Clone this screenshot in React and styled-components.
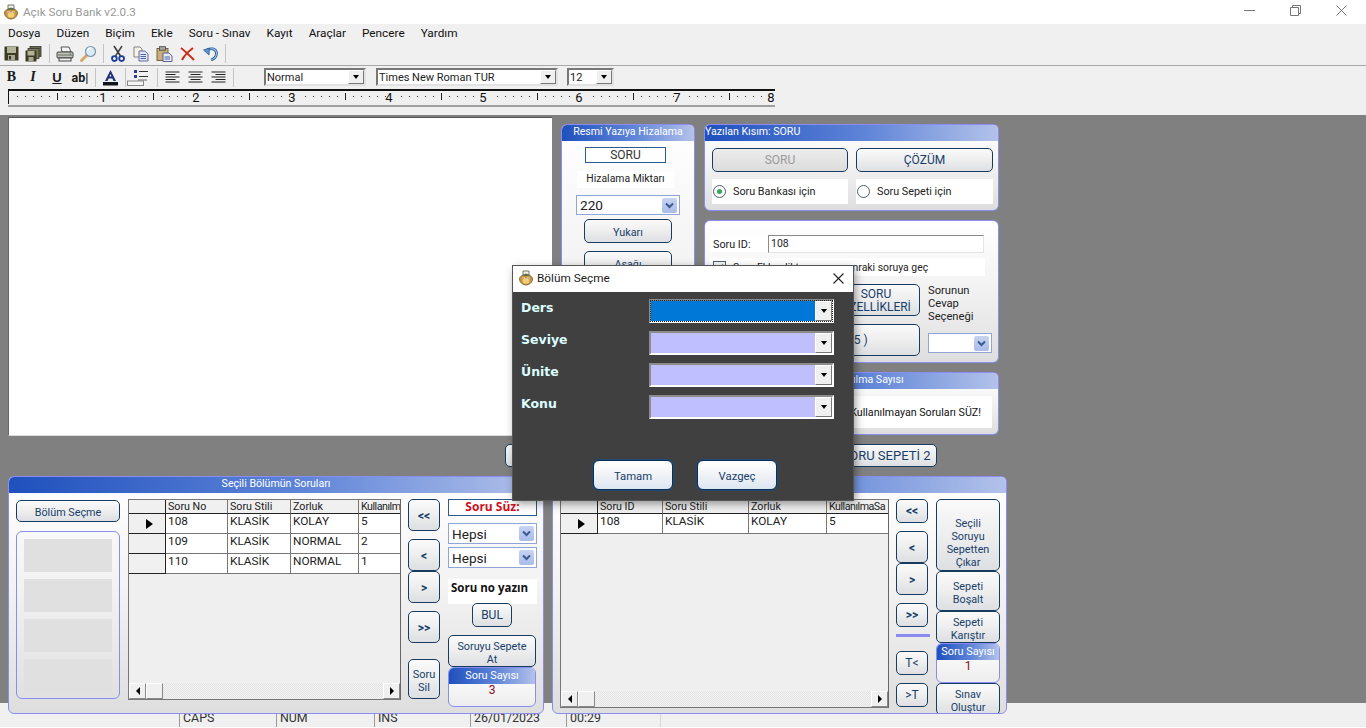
import React from 'react';
import styled, { createGlobalStyle, css } from 'styled-components';

const UI = 'Roboto, "Open Sans", "Liberation Sans", sans-serif';

const Global = createGlobalStyle`
  html, body { margin: 0; padding: 0; height: 100%; overflow: hidden; }
  body { font-family: ${UI}; font-size: 12px; color: #000; background: #f0f0f0; }
  * { box-sizing: border-box; }
`;

const Page = styled.div`
  width: 1366px;
  height: 728px;
  display: flex;
  flex-direction: column;
  position: relative;
  overflow: hidden;
  background: #f0f0f0;
`;

/* title + menu */
const TitleBar = styled.div`
  height: 24px;
  background: #fff;
  display: flex;
  align-items: center;
  padding-left: 3px;
  gap: 4px;
  color: #999;
  font-size: 11.7px;
`;
const WinButtons = styled.div`
  margin-left: auto;
  display: flex;
  height: 100%;
  margin-right: 2px;
`;
const WinBtn = styled.div`
  width: 46px;
  display: flex;
  align-items: center;
  justify-content: center;
  margin-top: -3px;
`;
const MenuBar = styled.div`
  height: 18px;
  display: flex;
  padding-left: 8px;
  gap: 16px;
  align-items: center;
  font-size: 11.8px;
  color: #111;
`;
const ToolRow = styled.div`
  height: 24px;
  display: flex;
  align-items: center;
  padding-left: 3px;
  border-bottom: ${p => (p.$line ? '1px solid #a8a8a8' : '0')};
`;
const FormatRow = styled.div`
  height: 22px;
  display: flex;
  align-items: center;
  padding-left: 4px;
`;
const ToolIcon = styled.span`
  width: ${p => p.$w || 23}px;
  height: 18px;
  display: flex;
  align-items: center;
  justify-content: center;
  flex: none;
`;
const ToolSep = styled.span`
  width: 1px;
  height: 19px;
  background: #c4c4c4;
  margin: 0 ${p => p.$r ?? 3}px 0 ${p => p.$l ?? 3}px;
  flex: none;
`;
const FmtLetter = styled.span`
  width: ${p => p.$w || 23}px;
  flex: none;
  text-align: center;
  color: #1a1a1a;
  font: ${p => p.$font};
  text-decoration: ${p => (p.$u ? 'underline' : 'none')};
`;
const ToolCombo = styled.div`
  width: ${p => p.$w}px;
  height: 18px;
  margin-left: ${p => p.$ml || 0}px;
  flex: none;
  background: #fff;
  border: 2px solid;
  border-color: #777 #e2e2e2 #e2e2e2 #777;
  display: flex;
  align-items: center;
  font-size: 11px;
  padding-left: 1px;
  color: #222;
  justify-content: space-between;
`;
const ArrowBox = styled.span`
  width: 16px;
  height: 100%;
  background: #f0f0f0;
  border: 1px solid;
  border-color: #fff #777 #777 #fff;
  display: flex;
  align-items: center;
  justify-content: center;
  &::after {
    content: '';
    border: 3px solid transparent;
    border-top: 4px solid #000;
    border-bottom: 0;
  }
`;
const RulerWrap = styled.div`
  height: 27px;
  padding-left: 8px;
`;
const RulerSvg = styled.svg`
  display: block;
`;

/* mdi workspace */
const Workspace = styled.div`
  flex: 1;
  background: #808080;
  display: flex;
  flex-direction: column;
  padding: 2px 0 0 8px;
  position: relative;
  z-index: 1;
  min-height: 0;
`;
const TopArea = styled.div`
  display: flex;
  height: 319px;
`;
const Editor = styled.div`
  width: 544px;
  height: 319px;
  background: #fff;
  border-top: 1px solid #555;
  border-left: 1px solid #666;
  border-bottom: 1px solid #ddd;
`;
const panelBase = css`
  border: 1px solid #8a8cf0;
  border-radius: 6px;
  overflow: hidden;
  background: linear-gradient(180deg, #ffffff 0%, #f3f3f3 45%, #dedede 100%);
  display: flex;
  flex-direction: column;
`;
const Panel = styled.section`
  ${panelBase}
  width: ${p => p.$w}px;
  height: ${p => p.$h}px;
  flex: none;
`;
const PanelHead = styled.header`
  height: 16px;
  flex: none;
  background: linear-gradient(90deg, #1f50bd 0%, #5f85d8 55%, #b3c2ea 100%);
  color: #fff;
  font-size: ${p => p.$fs || 10.6}px;
  line-height: ${p => p.$lh || 14}px;
  text-align: ${p => p.$align || 'center'};
  white-space: nowrap;
  overflow: hidden;
`;
const HizalamaPanel = styled(Panel)`
  margin: 7px 0 0 9px;
  align-self: flex-start;
`;
const HizalamaBody = styled.div`
  display: flex;
  flex-direction: column;
  padding: 6px 14px 0 14px;
`;
const SideColumn = styled.div`
  margin: 7px 0 0 9px;
  width: 295px;
  display: flex;
  flex-direction: column;
  gap: 9px;
`;
const SoruBox = styled.div`
  width: 81px;
  height: 16px;
  margin-left: 9px;
  background: #fff;
  border: 1px solid #2a5a90;
  text-align: center;
  font-size: 12px;
  line-height: 14px;
  color: #333;
`;
const WhiteLabel = styled.div`
  background: #fff;
  font-size: ${p => p.$fs || 10.8}px;
  color: #222;
  white-space: nowrap;
  ${p => p.$center && 'text-align: center;'}
`;
const MiktarLabel = styled(WhiteLabel)`
  width: 97px;
  height: 17px;
  line-height: 16px;
  margin: 8px 0 7px 1px;
`;

const Btn = styled.button`
  width: ${p => (p.$w ? `${p.$w}px` : 'auto')};
  height: ${p => (p.$h ? `${p.$h}px` : 'auto')};
  margin: 0;
  padding: ${p => p.$pt || 0}px 0 0;
  flex: none;
  font-family: ${UI};
  font-size: ${p => p.$fs || 10.8}px;
  line-height: 13px;
  color: ${p => (p.$disabled ? '#9a9a9a' : '#17406b')};
  border: 1px solid #173c5f;
  border-radius: 5px;
  background: ${p => (p.$disabled ? 'linear-gradient(180deg,#ececec,#dcdcdc)' : 'linear-gradient(180deg,#fafafa 0%,#eeeeee 50%,#dddfe3 100%)')};
  display: flex;
  align-items: center;
  justify-content: center;
  text-align: center;
  white-space: pre-line;
`;

const Combo = styled.div`
  width: ${p => p.$w}px;
  height: ${p => p.$h}px;
  margin-top: ${p => p.$mt || 0}px;
  flex: none;
  background: #fff;
  border: 1px solid #8fa4d8;
  display: flex;
  align-items: center;
  justify-content: space-between;
  padding: 0 2px 0 3px;
  font-size: 13.6px;
  color: #222;
`;
const ChevBox = styled.span`
  width: 15px;
  height: 15px;
  border-radius: 2px;
  background: linear-gradient(180deg, #c7d3f2, #a9bce9);
  display: flex;
  align-items: center;
  justify-content: center;
`;
const Chev = () => (
  <ChevBox>
    <svg width="9" height="7" viewBox="0 0 9 7">
      <path d="M1 1.5 L4.5 5 L8 1.5" fill="none" stroke="#3a5a8f" strokeWidth="2" />
    </svg>
  </ChevBox>
);

const YazilanPanel = styled.div`
  padding: 7px 7px 0;
  display: grid;
  grid-template-columns: 136px 137px;
  column-gap: 8px;
  row-gap: 7px;
`;
const RadioRow = styled.label`
  background: #fff;
  height: 25px;
  display: flex;
  align-items: center;
  gap: 7px;
  padding-left: 1px;
  font-size: 10.8px;
  color: #222;
`;
const RadioDot = styled.span`
  width: 13px;
  height: 13px;
  border-radius: 50%;
  border: 1px solid #4c5f68;
  background: #fff;
  display: flex;
  align-items: center;
  justify-content: center;
  &::after {
    content: '';
    width: 5px;
    height: 5px;
    border-radius: 50%;
    background: ${p => (p.$on ? '#3aa65a' : 'transparent')};
  }
`;
const SoruPanelBody = styled.div`
  padding: 14px 6px 0 5px;
  display: flex;
  flex-direction: column;
`;
const IdRow = styled.div`
  display: flex;
  align-items: center;
`;
const IdLabel = styled(WhiteLabel)`
  width: 58px;
  padding-left: 3px;
  line-height: 15px;
`;
const IdInput = styled.div`
  width: 216px;
  height: 18px;
  background: #fff;
  border: 1px solid;
  border-color: #8a8a8a #e4e4e4 #e4e4e4 #8a8a8a;
  font-size: 10.5px;
  line-height: 16px;
  padding-left: 2px;
  color: #222;
`;
const CheckLine = styled.div`
  width: 275px;
  height: 18px;
  margin-top: 5px;
  background: #fff;
  display: flex;
  align-items: center;
  gap: 7px;
  padding-left: 3px;
  font-size: 10.4px;
  color: #222;
  white-space: nowrap;
`;
const CheckMark = styled.span`
  width: 13px;
  height: 13px;
  border: 1px solid #4c5f68;
  background: #f4f4f4;
  display: flex;
  align-items: center;
  justify-content: center;
`;
const OptionGrid = styled.div`
  display: grid;
  grid-template-columns: 208px 65px;
  column-gap: 8px;
  margin: 8px 0 0 2px;
`;
const LeftOptions = styled.div`
  display: flex;
  flex-direction: column;
  align-items: flex-end;
  gap: 8px;
`;
const AnswerColumn = styled.div`
  display: flex;
  flex-direction: column;
  gap: 9px;
`;
const AnswerLabel = styled.div`
  font-size: 11.2px;
  line-height: 13px;
  height: 40px;
  color: #222;
`;
const SuzBox = styled.div`
  margin: 7px 6px 0;
  height: 32px;
  background: #fff;
  display: flex;
  align-items: center;
  justify-content: flex-end;
  padding-right: 11px;
  font-size: 10.7px;
  color: #111;
  white-space: nowrap;
`;
const TabRow = styled.div`
  display: flex;
  gap: 4px;
  margin: 8px 0 9px 497px;
`;

/* lower panels */
const BottomArea = styled.div`
  display: flex;
  gap: 8px;
  align-items: flex-start;
`;
const SplitBody = styled.div`
  display: flex;
  flex: 1;
  padding: 6px 7px 0 7px;
  gap: 7px;
`;
const LeftRail = styled.div`
  width: 104px;
  margin-right: 1px;
  display: flex;
  flex-direction: column;
  padding-top: 1px;
  gap: 9px;
`;
const BlockGroup = styled.div`
  width: 104px;
  height: 168px;
  border: 1px solid #8a8cf0;
  border-radius: 6px;
  padding: 7px 7px 0 7px;
  display: flex;
  flex-direction: column;
  gap: 7px;
`;
const GreyBlock = styled.div`
  height: 33px;
  background: #e0e0e0;
`;

const GridBox = styled.div`
  width: ${p => p.$w}px;
  height: ${p => p.$h}px;
  flex: none;
  border: 1px solid #777;
  border-right-color: #666;
  background: #efefef;
  display: flex;
  flex-direction: column;
  font-size: 12px;
  overflow: hidden;
`;
const GridRows = styled.div`
  flex: 1;
`;
const GridRow = styled.div`
  display: flex;
  height: ${p => (p.$head ? 14 : 20)}px;
`;
const RowHead = styled.div`
  width: 37px;
  flex: none;
  background: #f0f0f0;
  border-right: 1px solid #222;
  border-bottom: 1px solid #222;
  display: flex;
  align-items: center;
  justify-content: center;
  padding-top: 1px;
  &::after {
    content: ${p => (p.$current ? "''" : 'none')};
    border: 5px solid transparent;
    border-left: 7px solid #000;
    border-right: 0;
    margin-left: 4px;
  }
`;
const Cell = styled.div`
  width: ${p => p.$w}px;
  flex: none;
  padding-left: 2px;
  background: ${p => (p.$head ? '#f0f0f0' : '#fff')};
  border-right: 1px solid #777;
  border-bottom: 1px solid ${p => (p.$head ? '#222' : '#777')};
  font-size: ${p => (p.$head ? 10.7 : 11.8)}px;
  line-height: ${p => (p.$head ? 13 : 14)}px;
  letter-spacing: ${p => (p.$tight ? '-0.5px' : 'normal')};
  color: #222;
  white-space: nowrap;
  overflow: hidden;
`;
const HScroll = styled.div`
  height: 16px;
  flex: none;
  display: flex;
  background: repeating-conic-gradient(#f2f2f2 0 25%, #e4e4e4 0 50%) 0 0 / 2px 2px;
  justify-content: space-between;
`;
const ScrollBtn = styled.span`
  width: 17px;
  height: 16px;
  background: #f0f0f0;
  border: 1px solid;
  border-color: #fff #888 #888 #fff;
  display: flex;
  align-items: center;
  justify-content: center;
  &::after {
    content: '';
    border: 4px solid transparent;
    ${p => (p.$dir === 'left' ? 'border-right: 4px solid #000; border-left: 0;' : '')}
    ${p => (p.$dir === 'right' ? 'border-left: 4px solid #000; border-right: 0;' : '')}
    ${p => (p.$dir ? '' : 'display: none;')}
  }
`;
const ScrollStart = styled.div`
  display: flex;
`;
const NavColumn = styled.div`
  width: 32px;
  flex: none;
  display: flex;
  flex-direction: column;
`;
const NavBtn = styled(Btn)`
  width: 32px;
  margin-top: ${p => p.$mt || 0}px;
  font-size: ${p => p.$fs || 12}px;
  font-weight: ${p => (p.$bold ? 700 : 400)};
`;
const Rule = styled.div`
  width: 34px;
  height: 3px;
  margin-top: 7px;
  background: #8c8cf0;
`;
const FilterColumn = styled.div`
  width: 89px;
  flex: none;
  margin-left: 1px;
  display: flex;
  flex-direction: column;
`;
const SuzTitle = styled.div`
  height: 17px;
  background: #fff;
  border: 1px solid #2a5a90;
  color: #d01020;
  font-family: "Open Sans", sans-serif;
  font-weight: 700;
  font-size: 12px;
  line-height: 14px;
  text-align: center;
`;
const SoruNoBox = styled.div`
  height: 25px;
  margin-top: 11px;
  background: #fff;
  font-family: "Open Sans", sans-serif;
  font-weight: 700;
  font-size: 11.5px;
  color: #111;
  padding: 1px 0 0 3px;
  white-space: nowrap;
`;
const CounterBox = styled.div`
  ${panelBase}
  width: ${p => p.$w}px;
  height: 40px;
  flex: none;
  background: linear-gradient(180deg,#ffffff,#ededed);
`;
const CounterValue = styled.div`
  text-align: center;
  color: #8a1020;
  font-size: 12px;
  line-height: 13px;
`;
const ActionColumn = styled.div`
  width: 64px;
  flex: none;
  margin-left: 1px;
  display: flex;
  flex-direction: column;
`;
const MarginBtn = styled(Btn)`
  margin-top: ${p => p.$mt || 0}px;
  margin-left: ${p => p.$ml || 0}px;
`;

/* status bar */
const StatusBar = styled.div`
  height: 25px;
  flex: none;
  display: flex;
  padding-left: 179px;
  background: #f0f0f0;
  border-bottom: 1px solid #fff;
  font-size: 12.4px;
  color: #333;
`;
const StatusCell = styled.div`
  width: ${p => p.$w || 97}px;
  border-left: 1px solid #9a9a9a;
  padding: 7px 0 0 3px;
  line-height: 15px;
  ${p => p.$last && 'border-right: 1px solid #d8d8d8;'}
`;

/* modal */
const Dialog = styled.div`
  position: absolute;
  left: 513px;
  top: 266px;
  width: 340px;
  height: 234px;
  z-index: 5;
  background: #404040;
  box-shadow: 0 0 0 1px #555, 2px 3px 9px rgba(0, 0, 0, 0.45);
  display: flex;
  flex-direction: column;
`;
const DialogTitle = styled.div`
  height: 26px;
  flex: none;
  background: #fff;
  display: flex;
  align-items: center;
  padding: 0 9px 3px 5px;
  gap: 3px;
  font-size: 11.8px;
  color: #222;
`;
const DialogClose = styled.span`
  margin-left: auto;
  display: flex;
  margin-top: 2px;
`;
const DialogFields = styled.div`
  padding: 7px 19px 0 8px;
  display: grid;
  grid-template-rows: repeat(4, 24px);
  row-gap: 8px;
`;
const FieldRow = styled.div`
  display: flex;
  justify-content: space-between;
`;
const FieldLabel = styled.span`
  color: #dcffff;
  font-family: "DejaVu Sans", sans-serif;
  font-weight: 700;
  font-size: 12.5px;
  line-height: 17px;
`;
const FieldCombo = styled.div`
  width: 185px;
  height: 24px;
  border: 2px solid;
  border-color: #8c8c8c #fff #fff #8c8c8c;
  background: ${p => (p.$active ? '#0078d7' : '#bfbfff')};
  display: flex;
  justify-content: flex-end;
  ${p => p.$active && `
    outline: 1px dotted #222;
    outline-offset: -2px;
  `}
`;
const FieldArrow = styled.span`
  width: 17px;
  height: 20px;
  background: #f0f0f0;
  border: 1px solid;
  border-color: #fff #777 #777 #fff;
  display: flex;
  align-items: center;
  justify-content: center;
  &::after {
    content: '';
    border: 3.5px solid transparent;
    border-top: 4px solid #000;
    border-bottom: 0;
  }
`;
const DialogButtons = styled.div`
  display: flex;
  gap: 24px;
  padding-left: 80px;
  margin-top: 41px;
`;
const DialogBtn = styled(Btn)`
  width: 80px;
  height: 30px;
  padding-top: 2px;
  font-size: 11.3px;
  border-color: #0d2f52;
  border-radius: 6px;
  background: linear-gradient(180deg, #ffffff 0%, #f2f4f7 45%, #dce6f2 100%);
  box-shadow: 0 0 0 1px #1f4b78;
`;

const AppIcon = ({ size = 16 }) => (
  <svg width={size} height={size} viewBox="0 0 16 16">
    <path d="M1.5 9 C1.5 6 5 5 8 5 C11 5 14.5 6 14.5 9 C14.5 12.5 11 15 8 15 C5 15 1.5 12.5 1.5 9 Z" fill="#c8963e" stroke="#6b4a18" strokeWidth="0.7" />
    <path d="M5 1 H11 V5 H5 Z" fill="#f4f2e6" stroke="#4b5a40" strokeWidth="0.8" />
    <path d="M3 5.4 L13 5.4 L8 3.6 Z" fill="#5a6a50" />
    <ellipse cx="8" cy="11" rx="3.4" ry="2.8" fill="#f0cf7a" />
    <circle cx="5.6" cy="8" r="1.1" fill="#fff" />
    <circle cx="10.4" cy="8" r="1.1" fill="#fff" />
    <circle cx="5.6" cy="8" r="0.5" fill="#333" />
    <circle cx="10.4" cy="8" r="0.5" fill="#333" />
  </svg>
);

const IconSave = () => (
  <svg width="15" height="15" viewBox="0 0 15 15">
    <rect x="0.5" y="0.5" width="14" height="14" fill="#3c3c24" />
    <rect x="3" y="1" width="9" height="6" fill="#b4b49a" />
    <rect x="4" y="9" width="7" height="5" fill="#a8a890" />
    <rect x="5" y="10" width="2" height="3.5" fill="#333" />
  </svg>
);
const IconSaveAll = () => (
  <svg width="17" height="16" viewBox="0 0 17 16">
    <rect x="5" y="0.5" width="11" height="10" fill="#6a6a48" stroke="#333" strokeWidth="0.8" />
    <rect x="3" y="2.5" width="11" height="10" fill="#7c7c58" stroke="#333" strokeWidth="0.8" />
    <rect x="0.5" y="4.5" width="11" height="11" fill="#3c3c24" />
    <rect x="2.5" y="5" width="7" height="4.5" fill="#b4b49a" />
    <rect x="3.5" y="11" width="5" height="4" fill="#a8a890" />
  </svg>
);
const IconPrint = () => (
  <svg width="18" height="16" viewBox="0 0 18 16">
    <path d="M5 1 H13 L15 6 H6 Z" fill="#f4f4f4" stroke="#444" strokeWidth="0.9" />
    <rect x="1" y="6" width="16" height="6" rx="1" fill="#c0c4bc" stroke="#333" strokeWidth="0.9" />
    <rect x="3" y="12" width="12" height="3" fill="#f0f0f0" stroke="#333" strokeWidth="0.9" />
    <path d="M2 9 H16" stroke="#555" strokeWidth="0.8" />
    <circle cx="14" cy="8" r="0.8" fill="#5a8a5a" />
  </svg>
);
const IconPreview = () => (
  <svg width="17" height="17" viewBox="0 0 17 17">
    <path d="M1.5 15.5 L7 10" stroke="#d8a868" strokeWidth="3" strokeLinecap="round" />
    <circle cx="10.5" cy="6.5" r="5" fill="#dcecf6" stroke="#7a98a8" strokeWidth="1.2" />
    <path d="M7.5 6 A3 3 0 0 1 10.5 3.2" stroke="#fff" strokeWidth="1.2" fill="none" />
  </svg>
);
const IconCut = () => (
  <svg width="14" height="17" viewBox="0 0 14 17">
    <path d="M3 1 L9.5 11" stroke="#333" strokeWidth="1.5" />
    <path d="M11 1 L4.5 11" stroke="#444" strokeWidth="1.5" />
    <circle cx="3.4" cy="13.6" r="2.4" fill="none" stroke="#1d3f9a" strokeWidth="1.8" />
    <circle cx="10.6" cy="13.6" r="2.4" fill="none" stroke="#1d3f9a" strokeWidth="1.8" />
  </svg>
);
const IconCopy = () => (
  <svg width="16" height="16" viewBox="0 0 16 16">
    <path d="M1 1 H7 L9 3 V11 H1 Z" fill="#f6f4e4" stroke="#777" strokeWidth="0.9" />
    <path d="M6 5 H12 L15 8 V15 H6 Z" fill="#dfe6f8" stroke="#5a5a8a" strokeWidth="0.9" />
    <path d="M7.5 8.5 H13 M7.5 10.5 H13 M7.5 12.5 H13" stroke="#5060b0" strokeWidth="1" />
  </svg>
);
const IconPaste = () => (
  <svg width="17" height="16" viewBox="0 0 17 16">
    <rect x="1" y="2.5" width="11" height="12" fill="#c8b078" stroke="#6a5a38" strokeWidth="0.9" />
    <rect x="3.5" y="0.7" width="6" height="3.5" fill="#a8a8a0" stroke="#444" strokeWidth="0.8" />
    <path d="M7 7 H13 L16 10 V15.5 H7 Z" fill="#e8ecf8" stroke="#505088" strokeWidth="0.9" />
    <path d="M8.5 11 H14 M8.5 13 H14" stroke="#5060b0" strokeWidth="1" />
  </svg>
);
const IconDelete = () => (
  <svg width="15" height="14" viewBox="0 0 15 14">
    <path d="M1 1 C5 4 10 9 14 13 M13 1 C9 4 4 9 2 13" stroke="#c82a18" strokeWidth="2" fill="none" />
  </svg>
);
const IconUndo = () => (
  <svg width="15" height="14" viewBox="0 0 15 14">
    <path d="M4 3 C7 1 13 1 13.5 6 C13.5 10 11 12 8 13" stroke="#1c4e8a" strokeWidth="2.6" fill="none" />
    <path d="M4 3 C7 1 13 1 13.5 6 C13.5 10 11 12 8 13" stroke="#9cc6ee" strokeWidth="1.1" fill="none" />
    <path d="M0.5 3 L6.5 1 L6 8 Z" fill="#5b93d0" stroke="#1c4e8a" strokeWidth="0.7" />
  </svg>
);
const IconFontColor = () => (
  <svg width="17" height="17" viewBox="0 0 17 17">
    <path d="M8.5 1 L3 12 H5.5 L6.6 9.5 H10.4 L11.5 12 H14 Z M7.5 7.5 L8.5 5 L9.5 7.5 Z" fill="#1e2e78" fillRule="evenodd" />
    <rect x="1" y="13" width="15" height="3.5" fill="#14141e" />
  </svg>
);
const IconList = () => (
  <svg width="21" height="17" viewBox="0 0 21 17">
    <rect x="7" y="1" width="3" height="3" fill="#2a3a98" />
    <rect x="7" y="6" width="3" height="3" fill="#2a3a98" />
    <path d="M12 2.5 H21 M12 7.5 H21" stroke="#333" strokeWidth="1.2" />
    <path d="M11 11 H20" stroke="#666" strokeWidth="1" />
    <rect x="0.5" y="12" width="16" height="4.5" fill="#f4f4f4" stroke="#888" strokeWidth="1" />
  </svg>
);
const IconAlign = ({ mode }) => {
  const rows = [14, 10, 14, 10, 14];
  return (
    <svg width="15" height="13" viewBox="0 0 15 13">
      {rows.map((w, i) => {
        const x = mode === 'left' ? 0.5 : mode === 'right' ? 14.5 - w : (15 - w) / 2;
        return <rect key={i} x={x} y={i * 2.5 + 0.5} width={w} height="1" fill="#222" />;
      })}
    </svg>
  );
};

const rulerLabels = [95, 188, 284, 381, 475, 571, 669, 763];

const Ruler = () => {
  const ticks = [];
  for (let i = 1; i < 96; i++) {
    const x = 1 + i * 8;
    if (i % 12 === 0) continue;
    if (i % 6 === 0) ticks.push(<rect key={i} x={x} y="5" width="1" height="7" fill="#222" />);
    else ticks.push(<rect key={i} x={x} y="8" width="1" height="1" fill="#333" />);
  }
  return (
    <RulerSvg width="768" height="20" viewBox="0 0 768 20">
      <rect x="0" y="1" width="767" height="2" fill="#111" />
      <rect x="0" y="1" width="1" height="15" fill="#111" />
      <rect x="0" y="17" width="767" height="2" fill="#a0a0a0" />
      {ticks}
      {rulerLabels.map((x, i) => (
        <text key={x} x={x} y="14" fontSize="13" textAnchor="middle" fontFamily="Roboto, sans-serif" fill="#111">{i + 1}</text>
      ))}
    </RulerSvg>
  );
};

const leftCols = [62, 63, 68, 42];
const rightCols = [65, 86, 78, 62];

const DataGrid = ({ w, h, cols, head, rows }) => (
  <GridBox $w={w} $h={h}>
    <GridRows>
      <GridRow $head>
        <RowHead />
        {head.map((t, i) => <Cell key={t} $head $tight={i === 3} $w={cols[i]}>{t}</Cell>)}
      </GridRow>
      {rows.map((r, ri) => (
        <GridRow key={r[0]}>
          <RowHead $current={ri === 0} />
          {r.map((t, i) => <Cell key={i} $w={cols[i]}>{t}</Cell>)}
        </GridRow>
      ))}
    </GridRows>
    <HScroll>
      <ScrollStart>
        <ScrollBtn $dir="left" />
        <ScrollBtn />
      </ScrollStart>
      <ScrollBtn $dir="right" />
    </HScroll>
  </GridBox>
);

export default function App() {
  return (
    <Page>
      <Global />
      <TitleBar>
        <AppIcon />
        <span>Açık Soru Bank v2.0.3</span>
        <WinButtons>
          <WinBtn>
            <svg width="11" height="11" viewBox="0 0 11 11"><path d="M0 5.5 H11" stroke="#777" /></svg>
          </WinBtn>
          <WinBtn>
            <svg width="11" height="11" viewBox="0 0 11 11"><path d="M0.5 2.5 H8.5 V10.5 H0.5 Z M2.5 2.5 V0.5 H10.5 V8.5 H8.5" fill="none" stroke="#777" /></svg>
          </WinBtn>
          <WinBtn>
            <svg width="11" height="11" viewBox="0 0 11 11"><path d="M0.5 0.5 L10.5 10.5 M10.5 0.5 L0.5 10.5" stroke="#777" /></svg>
          </WinBtn>
        </WinButtons>
      </TitleBar>
      <MenuBar>
        {['Dosya', 'Düzen', 'Biçim', 'Ekle', 'Soru - Sınav', 'Kayıt', 'Araçlar', 'Pencere', 'Yardım'].map(m => <span key={m}>{m}</span>)}
      </MenuBar>
      <ToolRow $line>
        <ToolIcon $w={17}><IconSave /></ToolIcon>
        <ToolIcon $w={26}><IconSaveAll /></ToolIcon>
        <ToolSep $l={3} $r={3} />
        <ToolIcon $w={24}><IconPrint /></ToolIcon>
        <ToolIcon $w={23}><IconPreview /></ToolIcon>
        <ToolSep $l={3} $r={3} />
        <ToolIcon $w={22}><IconCut /></ToolIcon>
        <ToolIcon $w={24}><IconCopy /></ToolIcon>
        <ToolIcon $w={23}><IconPaste /></ToolIcon>
        <ToolIcon $w={23}><IconDelete /></ToolIcon>
        <ToolIcon $w={23}><IconUndo /></ToolIcon>
        <ToolSep $l={3} $r={2} />
      </ToolRow>
      <FormatRow>
        <FmtLetter $w={15} $font={`700 14px "Liberation Serif", serif`}>B</FmtLetter>
        <FmtLetter $w={28} $font={`italic 700 14px "Liberation Serif", serif`}>I</FmtLetter>
        <FmtLetter $w={20} $u $font={`700 13px "Liberation Sans", sans-serif`}>U</FmtLetter>
        <FmtLetter $w={26} $font={`700 12.5px Roboto, sans-serif`}>ab|</FmtLetter>
        <ToolSep $l={2} $r={2} />
        <ToolIcon $w={25}><IconFontColor /></ToolIcon>
        <ToolSep $l={2} $r={1} />
        <ToolIcon $w={21}><IconList /></ToolIcon>
        <ToolSep $l={9} $r={3} />
        <ToolIcon $w={23}><IconAlign mode="left" /></ToolIcon>
        <ToolIcon $w={23}><IconAlign mode="center" /></ToolIcon>
        <ToolIcon $w={23}><IconAlign mode="right" /></ToolIcon>
        <ToolSep $l={3} $r={0} />
        <ToolCombo $w={102} $ml={30}>Normal<ArrowBox /></ToolCombo>
        <ToolCombo $w={182} $ml={10}>Times New Roman TUR<ArrowBox /></ToolCombo>
        <ToolCombo $w={47} $ml={9}>12<ArrowBox /></ToolCombo>
      </FormatRow>
      <RulerWrap><Ruler /></RulerWrap>

      <Workspace>
        <TopArea>
          <Editor />
          <HizalamaPanel $w={134} $h={310}>
            <PanelHead>Resmi Yazıya Hizalama</PanelHead>
            <HizalamaBody>
              <SoruBox>SORU</SoruBox>
              <MiktarLabel $center $fs={10.4}>Hizalama Miktarı</MiktarLabel>
              <Combo $w={104} $h={20}>220<Chev /></Combo>
              <MarginBtn $w={88} $h={24} $mt={4} $ml={8} $pt={2}>Yukarı</MarginBtn>
              <MarginBtn $w={88} $h={24} $mt={8} $ml={8} $pt={2}>Aşağı</MarginBtn>
            </HizalamaBody>
          </HizalamaPanel>
          <SideColumn>
            <Panel $w={295} $h={87}>
              <PanelHead $align="left">Yazılan Kısım: SORU</PanelHead>
              <YazilanPanel>
                <Btn $disabled $h={24} $fs={12}>SORU</Btn>
                <Btn $h={24} $fs={12}>ÇÖZÜM</Btn>
                <RadioRow><RadioDot $on />Soru Bankası için</RadioRow>
                <RadioRow><RadioDot />Soru Sepeti için</RadioRow>
              </YazilanPanel>
            </Panel>
            <Panel $w={295} $h={143}>
              <SoruPanelBody>
                <IdRow>
                  <IdLabel>Soru ID:</IdLabel>
                  <IdInput>108</IdInput>
                </IdRow>
                <CheckLine>
                  <CheckMark>
                    <svg width="9" height="9" viewBox="0 0 9 9"><path d="M1 4.5 L3.5 7.5 L8 1.5" fill="none" stroke="#3c6a4c" strokeWidth="1.4" /></svg>
                  </CheckMark>
                  Soru Eklendikten sonra sonraki soruya geç
                </CheckLine>
                <OptionGrid>
                  <LeftOptions>
                    <Btn $w={88} $h={32} $fs={12} $pt={2}>{'SORU\nÖZELLİKLERİ'}</Btn>
                    <Btn $w={208} $h={32} $fs={12}>Seçenek Sayısı ( 5 )</Btn>
                  </LeftOptions>
                  <AnswerColumn>
                    <AnswerLabel>Sorunun<br />Cevap<br />Seçeneği</AnswerLabel>
                    <Combo $w={64} $h={20}><span /><Chev /></Combo>
                  </AnswerColumn>
                </OptionGrid>
              </SoruPanelBody>
            </Panel>
            <Panel $w={295} $h={63}>
              <PanelHead>Soru Kullanılma Sayısı</PanelHead>
              <SuzBox>Kullanılmayan Soruları SÜZ!</SuzBox>
            </Panel>
          </SideColumn>
        </TopArea>
        <TabRow>
          <Btn $w={161} $h={23} $fs={13}>SORU BANKASI</Btn>
          <Btn $w={161} $h={23} $fs={13}>SORU SEPETİ 1</Btn>
          <Btn $w={102} $h={23} $fs={13}>SORU SEPETİ 2</Btn>
        </TabRow>
        <BottomArea>
          <Panel $w={536} $h={238}>
            <PanelHead>Seçili Bölümün Soruları</PanelHead>
            <SplitBody>
              <LeftRail>
                <Btn $w={104} $h={22} $pt={2}>Bölüm Seçme</Btn>
                <BlockGroup>
                  <GreyBlock />
                  <GreyBlock />
                  <GreyBlock />
                  <GreyBlock />
                </BlockGroup>
              </LeftRail>
              <DataGrid
                w={273}
                h={201}
                cols={leftCols}
                head={['Soru No', 'Soru Stili', 'Zorluk', 'Kullanılm']}
                rows={[
                  ['108', 'KLASİK', 'KOLAY', '5'],
                  ['109', 'KLASİK', 'NORMAL', '2'],
                  ['110', 'KLASİK', 'NORMAL', '1'],
                ]}
              />
              <NavColumn>
                <NavBtn $h={32} $bold $pt={3}>{'<<'}</NavBtn>
                <NavBtn $h={32} $mt={8} $bold $pt={3}>{'<'}</NavBtn>
                <NavBtn $h={32} $bold $pt={3}>{'>'}</NavBtn>
                <NavBtn $h={32} $mt={8} $bold $pt={2}>{'>>'}</NavBtn>
                <NavBtn $h={40} $mt={16} $pt={4} $fs={11}>{'Soru\nSil'}</NavBtn>
              </NavColumn>
              <FilterColumn>
                <SuzTitle>Soru Süz:</SuzTitle>
                <Combo $w={89} $h={21} $mt={7}>Hepsi<Chev /></Combo>
                <Combo $w={89} $h={21} $mt={3}>Hepsi<Chev /></Combo>
                <SoruNoBox>Soru no yazın</SoruNoBox>
                <MarginBtn $w={40} $h={24} $mt={-1} $ml={24} $fs={12}>BUL</MarginBtn>
                <MarginBtn $w={88} $h={32} $mt={8} $pt={4}>{'Soruyu Sepete\nAt'}</MarginBtn>
                <CounterBox $w={88}>
                  <PanelHead $fs={10.9} $lh={16}>Soru Sayısı</PanelHead>
                  <CounterValue>3</CounterValue>
                </CounterBox>
              </FilterColumn>
            </SplitBody>
          </Panel>
          <Panel $w={455} $h={238}>
            <PanelHead>Soru Sepeti</PanelHead>
            <SplitBody>
              <DataGrid
                w={329}
                h={209}
                cols={rightCols}
                head={['Soru ID', 'Soru Stili', 'Zorluk', 'KullanılmaSa']}
                rows={[['108', 'KLASİK', 'KOLAY', '5']]}
              />
              <NavColumn>
                <NavBtn $h={24} $bold>{'<<'}</NavBtn>
                <NavBtn $h={32} $mt={8} $bold $pt={3}>{'<'}</NavBtn>
                <NavBtn $h={32} $bold $pt={3}>{'>'}</NavBtn>
                <NavBtn $h={24} $mt={8} $bold>{'>>'}</NavBtn>
                <Rule />
                <NavBtn $h={24} $mt={14}>{'T<'}</NavBtn>
                <NavBtn $h={24} $mt={8}>{'>T'}</NavBtn>
              </NavColumn>
              <ActionColumn>
                <Btn $w={64} $h={72} $pt={16}>{'Seçili\nSoruyu\nSepetten\nÇıkar'}</Btn>
                <Btn $w={64} $h={40} $pt={4}>{'Sepeti\nBoşalt'}</Btn>
                <Btn $w={64} $h={32} $pt={4}>{'Sepeti\nKarıştır'}</Btn>
                <CounterBox $w={64}>
                  <PanelHead $fs={10.9} $lh={16}>Soru Sayısı</PanelHead>
                  <CounterValue>1</CounterValue>
                </CounterBox>
                <Btn $w={64} $h={32} $pt={4}>{'Sınav\nOluştur'}</Btn>
              </ActionColumn>
            </SplitBody>
          </Panel>
        </BottomArea>
      </Workspace>

      <StatusBar>
        <StatusCell>CAPS</StatusCell>
        <StatusCell $w={98}>NUM</StatusCell>
        <StatusCell $w={96}>INS</StatusCell>
        <StatusCell $w={96}>26/01/2023</StatusCell>
        <StatusCell $w={95} $last>00:29</StatusCell>
      </StatusBar>

      <Dialog>
        <DialogTitle>
          <AppIcon />
          <span>Bölüm Seçme</span>
          <DialogClose>
            <svg width="11" height="11" viewBox="0 0 11 11"><path d="M0.5 0.5 L10.5 10.5 M10.5 0.5 L0.5 10.5" stroke="#222" strokeWidth="1.1" /></svg>
          </DialogClose>
        </DialogTitle>
        <DialogFields>
          {['Ders', 'Seviye', 'Ünite', 'Konu'].map((f, i) => (
            <FieldRow key={f}>
              <FieldLabel>{f}</FieldLabel>
              <FieldCombo $active={i === 0}><FieldArrow /></FieldCombo>
            </FieldRow>
          ))}
        </DialogFields>
        <DialogButtons>
          <DialogBtn>Tamam</DialogBtn>
          <DialogBtn>Vazgeç</DialogBtn>
        </DialogButtons>
      </Dialog>
    </Page>
  );
}
